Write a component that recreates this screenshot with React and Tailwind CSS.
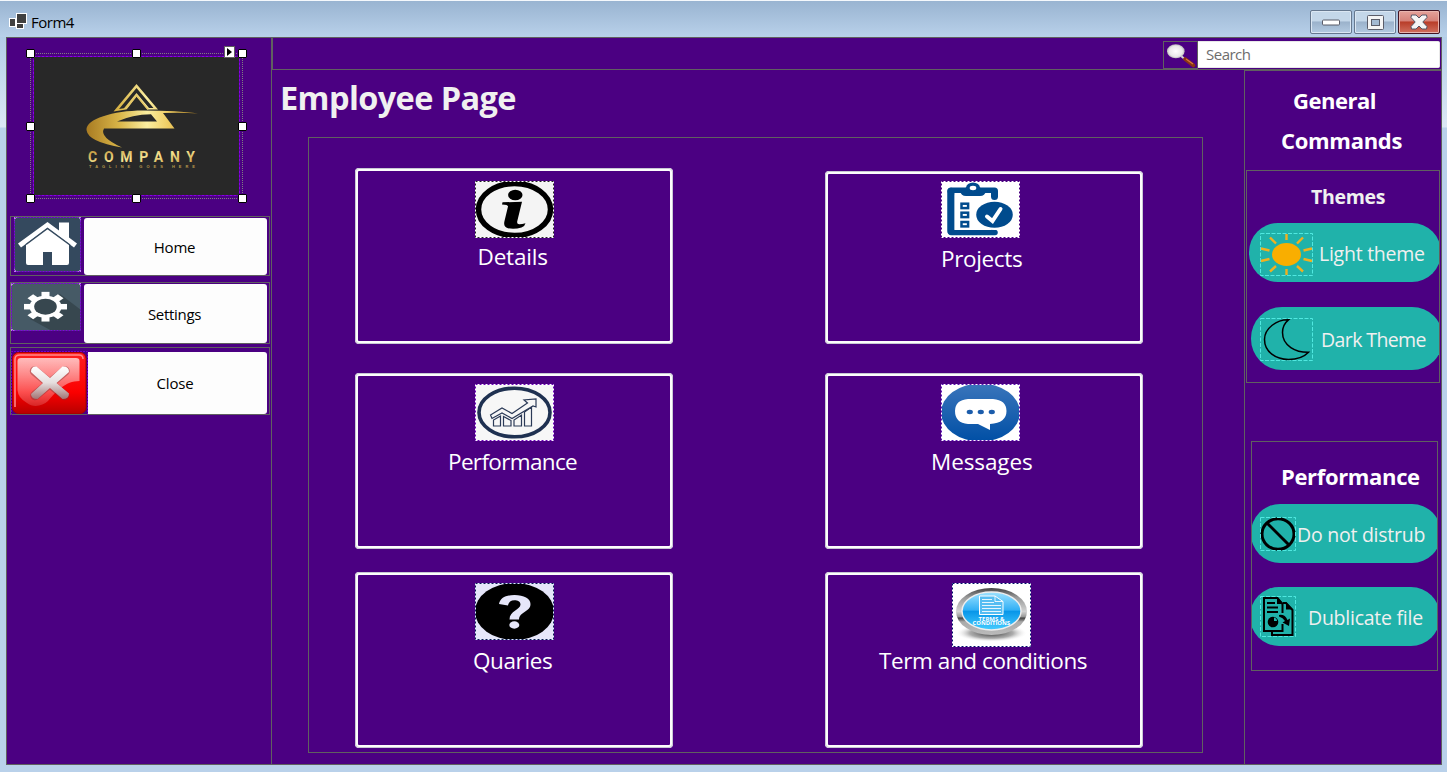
import React from "react";

function Label({ children, className }) {
  return <div className={"w-max whitespace-nowrap " + className}>{children}</div>;
}

function FormIcon() {
  return (
    <svg width="18" height="17" viewBox="0 0 18 17">
      <path d="M7 0H18V11H15V16H7V14H0V5H7Z" fill="#fff" />
      <path d="M8 1H17V10H8ZM1 6H6V13H1ZM8 11H14V15H8Z" fill="#404040" />
    </svg>
  );
}

function Logo() {
  return (
    <svg width="207" height="140" viewBox="33 56 207 140" className="block bg-[#282828]">
      <defs>
        <linearGradient id="gold" gradientUnits="userSpaceOnUse" x1="86" y1="0" x2="197" y2="0">
          <stop offset="0" stopColor="#a87b22" />
          <stop offset=".3" stopColor="#d9b548" />
          <stop offset=".55" stopColor="#fbeea0" />
          <stop offset=".75" stopColor="#eecb60" />
          <stop offset="1" stopColor="#a87b22" />
        </linearGradient>
        <linearGradient id="goldText" x1="0" y1="0" x2="1" y2="1">
          <stop offset="0" stopColor="#b98d32" />
          <stop offset=".5" stopColor="#f6e391" />
          <stop offset="1" stopColor="#c39a3e" />
        </linearGradient>
      </defs>
      <g fill="url(#gold)">
        <path d="M136.500 84L158 109.500Q153 109.300 147.500 109.600L136.500 96.500L126 109.500L113.500 111.500ZM136.500 88L119 109L124 108.300L136.500 93L149 108H153.500Z" fillRule="evenodd" />
        <path d="M198 113.500Q182 112.200 163 113L174.500 128.500H104Q99 137 122 147.500Q88 142 86.500 130C86 119 113 110.500 143 110.500Q178 110.500 198 113.500ZM117 121.500H157L151 114.200Q132 114.500 117 121.500Z" fillRule="evenodd" />
        <path d="M126 109L136.500 95.500L148 109.500" fill="none" stroke="#e4c566" strokeWidth="1.500" />
      </g>
      <text x="88" y="162" textLength="107" fontFamily="Roboto, sans-serif" fontWeight="700" fontSize="14" fill="url(#goldText)">COMPANY</text>
      <text x="89" y="167.600" textLength="106" fontFamily="Liberation Sans, sans-serif" fontWeight="700" fontSize="4" fill="#b6984c">TAGLINE GOES HERE</text>
      <rect x="33.500" y="56.500" width="206" height="139" fill="#282828" fillOpacity="0" stroke="#4b0082" />
      <rect x="33.500" y="56.500" width="206" height="139" fill="none" stroke="#8a00e6" strokeDasharray="3 1" />
    </svg>
  );
}

function HomeIcon() {
  return (
    <svg width="67" height="55" viewBox="14 217 67 55" className="block">
      <rect x="14" y="217" width="67" height="55" fill="#fff" />
      <rect x="14" y="217" width="67" height="55" rx="5" fill="#34495e" />
      <path d="M26 244L47.500 228L69 244V263Q69 265 67 265H52V252H43V265H28Q26 265 26 263Z" fill="#fff" />
      <path d="M18 243.500L47.500 222L59 230.500V222.500H69V237.500L77 243.500L74 247.500L47.500 228L21 247.500Z" fill="#fff" />
      <path d="M26 244.500L47.500 228.500L70 245" fill="none" stroke="#34495e" strokeWidth="1.500" />
      <rect x="14.500" y="217.500" width="66" height="54" fill="none" stroke="#8000e0" strokeDasharray="2 1" />
    </svg>
  );
}

function GearIcon() {
  return (
    <svg width="70" height="48" viewBox="11 283 70 48" className="block">
      <rect x="11" y="283" width="70" height="48" fill="#fff" />
      <rect x="11" y="283" width="70" height="48" rx="5" fill="#465a66" />
      <path d="M60 294L81 310V331H52L30 319Z" fill="#37474f" />
      <g fill="#fff" transform="translate(45.500 306.700) scale(1 .69)">
        {[0, 45, 90, 135].map((a) => (
          <rect key={a} x="-4" y="-21.500" width="8" height="43" transform={"rotate(" + a + ")"} />
        ))}
        <circle r="16" />
      </g>
      <ellipse cx="45.500" cy="306.700" rx="11.300" ry="8" fill="#37474f" />
      <rect x="11.500" y="283.500" width="69" height="47" fill="none" stroke="#8000e0" strokeDasharray="2 1" />
    </svg>
  );
}

function CloseIcon() {
  return (
    <svg width="77" height="64" viewBox="11 351 77 64" className="block">
      <defs>
        <linearGradient id="red" x1="0" y1="0" x2="0" y2="1">
          <stop offset="0" stopColor="#ff2020" />
          <stop offset=".65" stopColor="#fb0000" />
          <stop offset="1" stopColor="#b80000" />
        </linearGradient>
        <linearGradient id="gloss" x1="0" y1="0" x2="0" y2="1">
          <stop offset="0" stopColor="#fff" stopOpacity=".7" />
          <stop offset="1" stopColor="#fff" stopOpacity=".15" />
        </linearGradient>
        <linearGradient id="cross" x1="0" y1="0" x2="0" y2="1">
          <stop offset="0" stopColor="#fff" />
          <stop offset=".5" stopColor="#e5dede" />
          <stop offset="1" stopColor="#a27474" />
        </linearGradient>
      </defs>
      <rect x="12.500" y="352.500" width="73.500" height="61" rx="6" fill="url(#red)" stroke="#a80000" />
      <path d="M15 407V359Q15 355 20 355H79Q83 355 83 359" fill="none" stroke="#ff8a8a" strokeWidth="1.500" />
      <path d="M17.500 361Q17.500 358 21 358H76Q79.500 358 79.500 361V381C65 381 56 392 48 401C43 406 33 408 27 403Q18 398 17.500 390Z" fill="url(#gloss)" />
      <g fill="none" strokeLinecap="round">
        <path d="M34.500 371L64.500 395.500M65 371L35 395.500" stroke="#8a3030" strokeOpacity=".45" strokeWidth="9.500" />
      </g>
      <path d="M36.500 366.500L50 378L62.500 366.500Q69 366 69 372L56.500 383L69 393.500Q69 399 62.500 399L50 388L37.500 399Q31 399 31 394L43 383L31 372Q31 366 36.500 366.500Z" fill="url(#cross)" />
      <path d="M11.500 415V351.500H87.500V415" fill="none" stroke="#7000d0" strokeDasharray="2 1" />
    </svg>
  );
}

function Magnifier() {
  return (
    <svg width="33" height="26" viewBox="1164 42 33 26">
      <defs>
        <radialGradient id="lens"><stop offset="0" stopColor="#fff" /><stop offset=".75" stopColor="#e9e9e9" /><stop offset="1" stopColor="#b9b9b9" /></radialGradient>
      </defs>
      <path d="M1181 56L1186 60" stroke="#d6d6d6" strokeWidth="2" />
      <path d="M1185 59L1193.500 65.500" stroke="#8b3514" strokeWidth="3.600" strokeLinecap="round" />
      <path d="M1186 59L1193 64" stroke="#d5783a" strokeWidth="1.200" />
      <ellipse cx="1175.800" cy="51.300" rx="8.800" ry="7" fill="url(#lens)" />
    </svg>
  );
}

function Dash({ w = 79, h = 57, a = "#fff", b = "#4b0082" }) {
  return (
    <g fill="none">
      <rect x=".5" y=".5" width={w - 1} height={h - 1} stroke={a} />
      <rect x=".5" y=".5" width={w - 1} height={h - 1} stroke={b} strokeDasharray="2 2" />
    </g>
  );
}

function InfoIcon() {
  return (
    <svg width="79" height="57" viewBox="0 0 79 57" className="block bg-[#f4f4f4]">
      <ellipse cx="39.500" cy="28.500" rx="36" ry="26" fill="none" stroke="#000" strokeWidth="5.500" />
      <ellipse cx="40.300" cy="14" rx="7.200" ry="5.200" />
      <path d="M27.500 21.300L47 20.700L42.300 40Q41.500 43.500 44.500 43.300Q47 43 50.500 42.200Q50 45 46.500 46.400Q40 48.500 33 47.300Q28 46 29.500 40L33 25.500Q33.300 23.800 27 23.500Z" />
      <Dash b="#222" />
    </svg>
  );
}

function ProjectsIcon() {
  return (
    <svg width="79" height="57" viewBox="0 0 79 57" className="block bg-white">
      <g fill="none" stroke="#004b8d">
        <path d="M10 10.500V50" strokeWidth="7.500" strokeLinecap="round" />
        <path d="M10 10H53.500V15.500" strokeWidth="7" strokeLinecap="round" strokeLinejoin="round" />
        <path d="M10 51.500H54" strokeWidth="5.500" strokeLinecap="round" />
      </g>
      <path d="M13.500 12H50V49H13.500Z" fill="#fff" />
      <path d="M26 6Q31 1.500 38 6L45 10Q44 15 39 15H25Q20 15 19 10Z" fill="#004b8d" />
      <ellipse cx="32" cy="7" rx="7" ry="5.500" fill="#004b8d" />
      <ellipse cx="32" cy="7" rx="3.300" ry="2.200" fill="#fff" />
      <g fill="#fff" stroke="#004b8d" strokeWidth="2.500">
        <rect x="20.500" y="22.700" width="6.600" height="4.400" />
        <rect x="20.500" y="31.700" width="6.600" height="4.400" />
        <rect x="20.500" y="41" width="6.600" height="4.400" />
      </g>
      <ellipse cx="53.500" cy="34" rx="20" ry="15" fill="#fff" />
      <ellipse cx="53.500" cy="33.700" rx="18.300" ry="13" fill="#004b8d" />
      <path d="M46 35.500L51.500 40L59.500 28" fill="none" stroke="#fff" strokeWidth="4" strokeLinecap="round" />
      <Dash />
    </svg>
  );
}

function ChartIcon() {
  return (
    <svg width="79" height="57" viewBox="0 0 79 57" className="block bg-[#f7f7f7]">
      <ellipse cx="39.500" cy="28.500" rx="35.500" ry="24.300" fill="none" stroke="#1f3151" strokeWidth="3.600" />
      <g fill="none" stroke="#2b3a57" strokeWidth="1.200">
        <path d="M18.500 42V36L25.500 32V42ZM28.500 42V32.500L36 36.500V42ZM39 42V36L46.500 31V42ZM49.500 42V28L56.500 23V42Z" />
        <path d="M15.500 31L27 24L37 29.500L52.500 19L49 16L61 15V23L58 22L37 34.500L27 29L17 34.500Z" fill="#f7f7f7" />
      </g>
      <Dash b="#6a00b8" />
    </svg>
  );
}

function MessageIcon() {
  return (
    <svg width="79" height="57" viewBox="0 0 79 57" className="block bg-white">
      <defs><linearGradient id="blue" x1="0" y1="0" x2="0" y2="1"><stop offset="0" stopColor="#3a75bb" /><stop offset="1" stopColor="#004fa5" /></linearGradient></defs>
      <ellipse cx="39.500" cy="28.500" rx="39.500" ry="29" fill="url(#blue)" />
      <path d="M27 15H52Q65.500 16 65.500 27Q65.500 39 49 40V46L37 40H27Q14 39 14 27Q14 16 27 15Z" fill="#fff" />
      <g fill="#1b5cab"><ellipse cx="28.800" cy="28" rx="3.100" ry="2.200" /><ellipse cx="39.800" cy="28" rx="3.100" ry="2.200" /><ellipse cx="50.800" cy="28" rx="3.100" ry="2.200" /></g>
      <Dash b="#5a10b0" />
    </svg>
  );
}

function QuestionIcon() {
  return (
    <svg width="79" height="57" viewBox="0 0 79 57" className="block bg-[#e6e6fa]">
      <ellipse cx="39.500" cy="28.500" rx="39.500" ry="28.500" />
      <path d="M24 21C25 15 31 12 39.500 12C49 12 55.500 15.500 55.500 21C55.500 29 44.500 28.500 44 36.500H34.500C34.500 28 45.500 26.500 45.500 21.500C45.500 18.500 42.500 17.200 39.500 17.200C36 17.200 33.500 19 33 22.500Z" fill="#e6e6fa" />
      <ellipse cx="39.300" cy="42" rx="5" ry="3.700" fill="#e6e6fa" />
      <Dash a="#dfeaff" b="#0a1a50" />
    </svg>
  );
}

function TermsIcon() {
  return (
    <svg width="79" height="64" viewBox="0 0 79 64" className="block bg-white">
      <defs>
        <linearGradient id="ring" x1="0" y1="0" x2="0" y2="1"><stop offset="0" stopColor="#444" /><stop offset=".2" stopColor="#999" /><stop offset=".5" stopColor="#d2d2d2" /><stop offset=".61" stopColor="#999" /><stop offset=".64" stopColor="#444" /><stop offset=".72" stopColor="#aaa" /><stop offset="1" stopColor="#bbb" /></linearGradient>
        <linearGradient id="sky" x1="0" y1="0" x2="0" y2="1"><stop offset="0" stopColor="#9ce2ff" /><stop offset=".48" stopColor="#31aff5" /><stop offset=".5" stopColor="#0795e8" /><stop offset="1" stopColor="#45ccff" /></linearGradient>
        <radialGradient id="shade"><stop offset="0" stopColor="#333" /><stop offset=".6" stopColor="#888" stopOpacity=".7" /><stop offset="1" stopColor="#fff" stopOpacity="0" /></radialGradient>
      </defs>
      <ellipse cx="39.500" cy="50" rx="36" ry="9" fill="url(#shade)" />
      <ellipse cx="39.500" cy="28.500" rx="35.500" ry="23.500" fill="url(#ring)" />
      <ellipse cx="39.500" cy="28" rx="29.500" ry="19" fill="url(#sky)" stroke="#eee" strokeWidth="1.400" />
      <path d="M27.500 13H43L51 18.500V31.500H27.500Z" fill="#55bdf2" stroke="#fff" />
      <path d="M43 13V18.500H51M30 16.500H40M30 19.500H42M30 22.500H49M30 25.500H49M30 28.500H49" fill="none" stroke="#fff" strokeOpacity=".85" />
      <text x="26.500" y="37.700" textLength="26" lengthAdjust="spacingAndGlyphs" fontFamily="Open Sans, sans-serif" fontWeight="700" fontSize="4.800" fill="#fff">TERMS &amp;</text>
      <text x="20.500" y="42" textLength="37.500" lengthAdjust="spacingAndGlyphs" fontFamily="Open Sans, sans-serif" fontWeight="700" fontSize="5" fill="#fff">CONDITIONS</text>
      <Dash h={64} b="#00106a" />
    </svg>
  );
}

function TealDash({ w, h }) {
  return <rect x=".5" y=".5" width={w - 1} height={h - 1} fill="none" stroke="#50e8e0" strokeDasharray="4 1.500" />;
}

function SunIcon() {
  return (
    <svg width="53" height="43" viewBox="0 0 53 43" className="block">
      <TealDash w={53} h={43} />
      <ellipse cx="26.500" cy="21.500" rx="14.500" ry="11.400" fill="#f9ae00" />
      <path d="M26.500 1V7M26.500 36V42M10 4.500L16 10.500M43 4.500L37 10.500M1 15.500L9.500 17.500M52 15.500L43.500 17.500M1 28L9.500 26M52 28L43.500 26M10 38.500L16 33M43 38.500L37 33" stroke="#f2b01e" strokeWidth="2.400" />
    </svg>
  );
}

function MoonIcon() {
  return (
    <svg width="53" height="43" viewBox="0 0 53 43" className="block">
      <TealDash w={53} h={43} />
      <path d="M28.500 1.800C17 1.500 4.500 10 4.500 21.500C4.500 34 16 41.500 28.500 41.500C37 41.500 44.500 38.500 48.500 34.300C36 34.500 22.500 28 22.500 14.500C22.500 9 24.500 5 28.500 1.800Z" fill="none" stroke="#000" strokeWidth="1.500" />
    </svg>
  );
}

function BanIcon() {
  return (
    <svg width="36" height="34" viewBox="0 0 36 34" className="block">
      <ellipse cx="18" cy="17" rx="16" ry="15.300" fill="none" stroke="#000" strokeWidth="3" />
      <path d="M7 6L29 28" stroke="#000" strokeWidth="3" />
      <TealDash w={36} h={34} />
    </svg>
  );
}

function CopyIcon() {
  return (
    <svg width="36" height="41" viewBox="0 0 36 41" className="block">
      <g fill="none" stroke="#000" strokeWidth="2">
        <path d="M22.500 17V8L17.500 2H4V35H22.500V28" />
        <path d="M12 36V39H32.500V14L26 7H23" />
      </g>
      <path d="M17 1L24 8H17ZM26 6L33 13.500H26Z" />
      <path d="M7 7H15M7 11.500H18M7 16H18" stroke="#000" strokeWidth="1.800" />
      <circle cx="13" cy="26" r="5.300" />
      <path d="M14 25V21.500Q17 22 17 25Z" fill="#20b2aa" />
      <path d="M19 19Q25 18 27.500 24L30 22.500L29 30L22.500 26.500L25 25Q23 21.500 19 20.500Z" />
      <TealDash w={36} h={41} />
    </svg>
  );
}

function Handles() {
  return (
    <>
      {[0, 106, 212].map((x) =>
        [0, 73, 145].map((y) =>
          x === 106 && y === 73 ? null : (
            <span key={x + "-" + y} className="absolute h-[9px] w-[9px] rounded-[1px] border border-black bg-white" style={{ left: x - 5, top: y - 5 }} />
          )
        )
      )}
      <span className="absolute -top-[8px] left-[193px] flex h-3 w-[11px] items-center justify-center border border-[#606060] bg-white">
        <svg width="5" height="8"><path d="M0 0L5 4L0 8Z" /></svg>
      </span>
    </>
  );
}

function Card({ icon, label, className, iconClass, labelClass }) {
  return (
    <div className={"w-[318px] rounded-[4px] border-[3px] border-[#fdfdfd] outline outline-1 -outline-offset-1 outline-[#c8c8d4] " + className}>
      <div className={iconClass}>{icon}</div>
      <Label className={"text-[22.5px] leading-8 text-white " + labelClass}>{label}</Label>
    </div>
  );
}

function Pill({ icon, label, className, iconClass, labelClass }) {
  return (
    <div className={"flex shrink-0 bg-[#20b2aa] " + className}>
      <div className={iconClass}>{icon}</div>
      <Label className={"text-[19.5px] leading-8 text-[#f0f0f0] " + labelClass}>{label}</Label>
    </div>
  );
}

export default function App() {
  return (
    <div className="flex h-[772px] w-[1447px] flex-col overflow-hidden bg-[linear-gradient(to_bottom,#b4cee8_37px,#dce8f5_127px,#b9d1ea_128px)] font-['Open_Sans','Noto_Sans',sans-serif] text-black">
      <header className="flex h-[37px] shrink-0 items-start border-t border-[#f4f8fc] bg-gradient-to-b from-[#99b4d1] to-[#b9d1ea] pl-[9px] pr-[7px]">
        <div className="pt-3"><FormIcon /></div>
        <Label className="ml-[4px] mt-[11px] text-[15px] leading-5 tracking-[-0.5px]">Form4</Label>
        <div className="ml-auto mt-[9px] flex gap-[2px]">
          <div className="flex h-6 w-[42px] items-center justify-center rounded-[2px] border border-[#66788f] bg-[linear-gradient(#c4d7e9_45%,#9bb2cb_50%,#b4cbe2)] shadow-[inset_0_0_0_1px_#dbe7f3]">
            <svg width="18" height="8"><rect x=".5" y="2" width="17" height="5" rx="1" fill="#fff" stroke="#5b5d69" /></svg>
          </div>
          <div className="flex h-6 w-[42px] items-center justify-center rounded-[2px] border border-[#66788f] bg-[linear-gradient(#c4d7e9_45%,#9bb2cb_50%,#b4cbe2)] shadow-[inset_0_0_0_1px_#dbe7f3]">
            <svg width="17" height="15"><rect x=".5" y=".5" width="16" height="14" rx="1" fill="#f5f5f5" stroke="#5b5d69" /><rect x="4.500" y="4.500" width="8" height="6" fill="#a3bad2" stroke="#5b5d69" /></svg>
          </div>
          <div className="flex h-6 w-[42px] items-center justify-center rounded-[2px] border border-[#431422] bg-[linear-gradient(#e5a29b_0%,#d68279_45%,#b83d29_50%,#d1705f)] shadow-[inset_0_0_0_1px_#e8b5ae]">
            <svg width="18" height="16"><path d="M1.500 1H6L9 4L12 1H16.500L17 3.500L12.800 8L17 12.500L16.500 15H12L9 12L6 15H1.500L1 12.500L5.200 8L1 3.500Z" fill="#f5f5f5" stroke="#535666" /></svg>
          </div>
        </div>
      </header>

      <div className="ml-[6px] flex h-[728px] w-[1436px] border border-[#606060] bg-[#4b0082]">
        <aside className="flex w-[265px] shrink-0 flex-col border-r border-[#606060] pl-[3px]">
          <div className="relative ml-[20px] mt-[15px] h-[146px] w-[213px] border border-dotted border-[#808080] p-[2px]">
            <Logo />
            <Handles />
          </div>
          <div className="mt-[17px] flex h-[60px] w-[260px] border border-[#606060]">
            <div className="ml-[3px] w-[70px]"><HomeIcon /></div>
            <button className="mt-px flex h-[57px] w-[183px] justify-center rounded-[3px] bg-[#fdfdfd]"><Label className="mr-[2px] mt-[19px] text-[15px] leading-5 tracking-[-0.2px]">Home</Label></button>
          </div>
          <div className="mt-[6px] flex h-[62px] w-[260px] border border-[#606060]">
            <div className="w-[73px]"><GearIcon /></div>
            <button className="mt-px flex h-[59px] w-[183px] justify-center rounded-[3px] bg-[#fdfdfd]"><Label className="mr-[2px] mt-[20px] text-[15px] leading-5 tracking-[-0.3px]">Settings</Label></button>
          </div>
          <div className="mt-[3px] flex h-[68px] w-[260px] border border-[#606060]">
            <div className="mt-[3px] w-[77px]"><CloseIcon /></div>
            <button className="mt-1 flex h-[62px] w-[179px] justify-center rounded-r-[3px] bg-[#fdfdfd]"><Label className="mr-[5px] mt-[21px] text-[15px] leading-5 tracking-[-0.2px]">Close</Label></button>
          </div>
        </aside>

        <div className="flex w-[1169px] shrink-0 flex-col">
          <div className="flex h-[32px] shrink-0 justify-end border-b border-l border-[#606060] pr-px pt-[3px]">
            <div className="h-[28px] w-[35px] border border-[#606060]"><Magnifier /></div>
            <div className="flex h-[27px] w-[242px] rounded-r-[2px] border border-l-0 border-[#e8e8e8] bg-white">
              <Label className="ml-[8px] mt-[2px] text-[15px] leading-5 tracking-[-0.5px] text-[#6d6d6d]">Search</Label>
            </div>
          </div>

          <div className="flex flex-1">
            <main className="w-[972px] shrink-0">
              <h1><Label className="ml-[8px] mt-[6px] text-[32.5px] font-bold leading-[44px] tracking-[-0.6px] text-[#f0f0f0]">Employee Page</Label></h1>
              <section className="ml-[36px] mt-[17px] h-[616px] w-[895px] border border-[#606060]">
                <div className="ml-[46px] mt-[30px] grid w-[788px] grid-cols-[318px_318px] justify-between">
                  <Card className="h-[176px]" icon={<InfoIcon />} iconClass="ml-[117px] mt-[10px]" label="Details" labelClass="mt-[3px] ml-[119.5px] tracking-[-0.2px]" />
                  <Card className="mt-[3px] h-[173px]" icon={<ProjectsIcon />} iconClass="ml-[113px] mt-[7px]" label="Projects" labelClass="mt-[5px] ml-[113px] tracking-[-0.35px]" />
                  <Card className="mt-[29px] h-[176px]" icon={<ChartIcon />} iconClass="ml-[117px] mt-[8px]" label="Performance" labelClass="mt-[5px] ml-[90px] tracking-[-0.65px]" />
                  <Card className="mt-[29px] h-[176px]" icon={<MessageIcon />} iconClass="ml-[113px] mt-[8px]" label="Messages" labelClass="mt-[5px] ml-[103px] tracking-[-0.1px]" />
                  <Card className="mt-[23px] h-[176px]" icon={<QuestionIcon />} iconClass="ml-[117px] mt-[8px]" label="Quaries" labelClass="mt-[5px] ml-[115px] tracking-[-0.4px]" />
                  <Card className="mt-[23px] h-[176px]" icon={<TermsIcon />} iconClass="ml-[124px] mt-[8px]" label="Term and conditions" labelClass="-mt-[2px] ml-[51px] tracking-[-0.42px]" />
                </div>
              </section>
            </main>

            <aside className="flex w-[197px] shrink-0 flex-col border-l border-t border-[#606060]">
              <Label className="ml-[48px] mt-[9px] text-[22px] font-bold leading-[40px] tracking-[-0.5px] text-white">General</Label>
              <Label className="ml-[36px] text-[22px] font-bold leading-[40px] tracking-[-0.3px] text-white">Commands</Label>
              <section className="ml-px mt-[10px] h-[213px] w-[194px] overflow-hidden border border-[#606060]">
                <Label className="ml-[64px] mt-[9px] text-[19.5px] font-bold leading-[34px] tracking-[-0.3px] text-[#f0f0f0]">Themes</Label>
                <Pill className="ml-[2px] mt-[9px] h-[59px] w-[192px] rounded-[29px]" icon={<SunIcon />} iconClass="ml-[11px] mt-[10px]" label="Light theme" labelClass="ml-[6px] mt-[15px] tracking-[-0.25px]" />
                <Pill className="ml-[4px] mt-[25px] h-[63px] w-[192px] rounded-[31px]" icon={<MoonIcon />} iconClass="ml-[9px] mt-[11px]" label="Dark Theme" labelClass="ml-[8px] mt-[17px] tracking-[-0.6px]" />
              </section>
              <section className="ml-[6px] mt-[58px] h-[230px] w-[187px] overflow-hidden border border-[#606060]">
                <Label className="ml-[29px] mt-[14px] text-[22px] font-bold leading-[40px] tracking-[-0.35px] text-white">Performance</Label>
                <Pill className="-ml-px mt-[8px] h-[59px] w-[190px] rounded-[29px]" icon={<BanIcon />} iconClass="ml-[9px] mt-[13px]" label="Do not distrub" labelClass="ml-px mt-[15px] tracking-[-0.25px]" />
                <Pill className="-ml-[2px] mt-[24px] h-[59px] w-[190px] rounded-[29px]" icon={<CopyIcon />} iconClass="ml-[10px] mt-[9px]" label="Dublicate file" labelClass="ml-[12px] mt-[15px] tracking-[-0.25px]" />
              </section>
            </aside>
          </div>
        </div>
      </div>
    </div>
  );
}
